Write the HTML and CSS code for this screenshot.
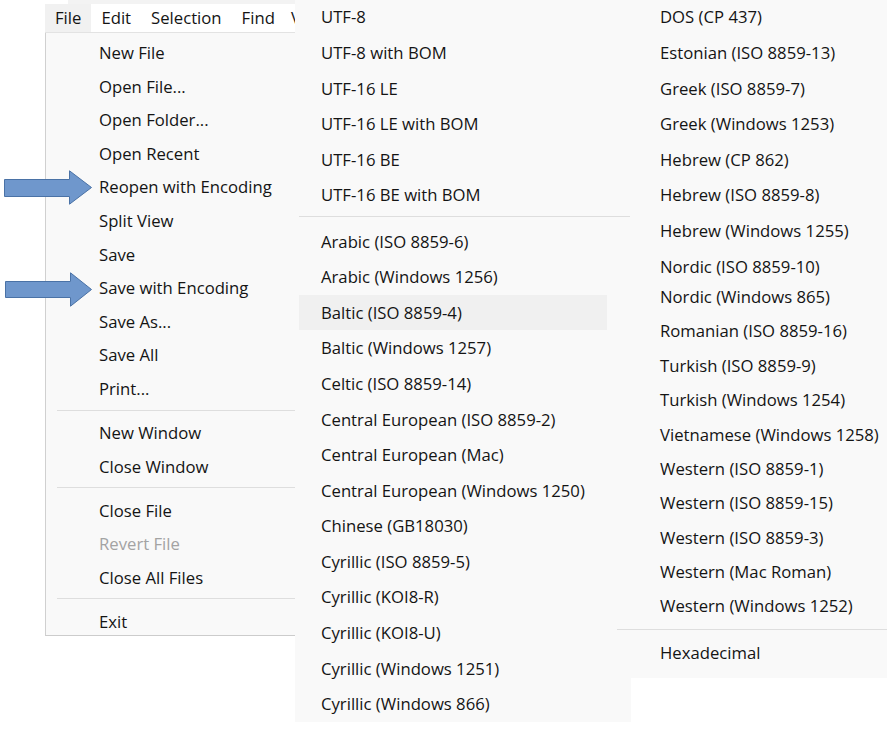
FILE: index.html
```html
<!DOCTYPE html>
<html lang="en">
<head>
<meta charset="utf-8">
<title>Encoding menus</title>
<link rel="stylesheet" href="styles.css">
</head>
<body>
<div class="canvas">
  <div class="top-strip"></div>

  <div class="app">
    <nav class="menubar">
      <span class="mb-item active">File</span>
      <span class="mb-item">Edit</span>
      <span class="mb-item">Selection</span>
      <span class="mb-item tight-right">Find</span>
      <span class="mb-item">View</span>
    </nav>
    <div class="menu file-menu">
      <div class="item">New File</div>
      <div class="item">Open File...</div>
      <div class="item">Open Folder...</div>
      <div class="item">Open Recent</div>
      <div class="item">Reopen with Encoding</div>
      <div class="item">Split View</div>
      <div class="item">Save</div>
      <div class="item">Save with Encoding</div>
      <div class="item">Save As...</div>
      <div class="item">Save All</div>
      <div class="item">Print...</div>
      <div class="sep"></div>
      <div class="item">New Window</div>
      <div class="item">Close Window</div>
      <div class="sep"></div>
      <div class="item">Close File</div>
      <div class="item disabled">Revert File</div>
      <div class="item">Close All Files</div>
      <div class="sep"></div>
      <div class="item">Exit</div>
    </div>
  </div>

  <div class="menu enc-menu enc-main">
    <div class="item">UTF-8</div>
    <div class="item">UTF-8 with BOM</div>
    <div class="item">UTF-16 LE</div>
    <div class="item">UTF-16 LE with BOM</div>
    <div class="item">UTF-16 BE</div>
    <div class="item">UTF-16 BE with BOM</div>
    <div class="sep"></div>
    <div class="item">Arabic (ISO 8859-6)</div>
    <div class="item">Arabic (Windows 1256)</div>
    <div class="item hover">Baltic (ISO 8859-4)</div>
    <div class="item">Baltic (Windows 1257)</div>
    <div class="item">Celtic (ISO 8859-14)</div>
    <div class="item">Central European (ISO 8859-2)</div>
    <div class="item">Central European (Mac)</div>
    <div class="item">Central European (Windows 1250)</div>
    <div class="item">Chinese (GB18030)</div>
    <div class="item">Cyrillic (ISO 8859-5)</div>
    <div class="item">Cyrillic (KOI8-R)</div>
    <div class="item">Cyrillic (KOI8-U)</div>
    <div class="item">Cyrillic (Windows 1251)</div>
    <div class="item">Cyrillic (Windows 866)</div>
  </div>

  <div class="menu enc-menu enc-more">
    <div class="item">DOS (CP 437)</div>
    <div class="item">Estonian (ISO 8859-13)</div>
    <div class="item">Greek (ISO 8859-7)</div>
    <div class="item">Greek (Windows 1253)</div>
    <div class="item">Hebrew (CP 862)</div>
    <div class="item">Hebrew (ISO 8859-8)</div>
    <div class="item">Hebrew (Windows 1255)</div>
    <div class="item">Nordic (ISO 8859-10)</div>
    <div class="item tight splice">Nordic (Windows 865)</div>
    <div class="item tight">Romanian (ISO 8859-16)</div>
    <div class="item tight">Turkish (ISO 8859-9)</div>
    <div class="item tight">Turkish (Windows 1254)</div>
    <div class="item tight">Vietnamese (Windows 1258)</div>
    <div class="item tight">Western (ISO 8859-1)</div>
    <div class="item tight">Western (ISO 8859-15)</div>
    <div class="item tight">Western (ISO 8859-3)</div>
    <div class="item tight">Western (Mac Roman)</div>
    <div class="item tight">Western (Windows 1252)</div>
    <div class="sep"></div>
    <div class="item tight">Hexadecimal</div>
  </div>

  <svg class="arrow arrow-reopen" width="90" height="36" viewBox="0 0 90 36" aria-hidden="true">
    <path d="M0.5 9.5 H65.5 V0.8 L87.5 17.5 L65.5 34.2 V26.5 H0.5 Z"/>
  </svg>
  <svg class="arrow arrow-save" width="90" height="36" viewBox="0 0 90 36" aria-hidden="true">
    <path d="M0.5 9.5 H65.5 V0.8 L86.5 17.5 L65.5 34.2 V25.5 H0.5 Z"/>
  </svg>
</div>
</body>
</html>
```

FILE: styles.css
```css
html, body {
  margin: 0;
  padding: 0;
  background: #ffffff;
}

body {
  font-family: "Open Sans", "Noto Sans", sans-serif;
  font-size: 16.7px;
  color: #141414;
  overflow: hidden;
}

.canvas {
  position: relative;
  width: 887px;
  height: 729px;
  overflow: hidden;
}

.top-strip {
  position: absolute;
  left: 68px;
  top: 0;
  width: 229px;
  height: 4px;
  background: #f3f3f3;
}

/* left application window: menu bar + file menu */
.app {
  position: absolute;
  left: 45px;
  top: 4px;
  width: 252px;
}

.menubar {
  display: flex;
  height: 28px;
  background: #ffffff;
  border-bottom: 1px solid #e3e3e3;
  white-space: nowrap;
  overflow: hidden;
}

.mb-item {
  display: flex;
  align-items: center;
  padding: 0 10px;
  line-height: 28px;
}

.mb-item.tight-right {
  padding-right: 6px;
}

.mb-item.active {
  background: #f1f1f1;
}

.menu {
  background: #f9f9f9;
  white-space: nowrap;
  box-sizing: border-box;
}

.item {
  height: 35.6px;
  line-height: 35.6px;
}

.file-menu {
  height: 603px;
  padding-top: 3px;
  border-left: 1px solid #d0d0d0;
  border-bottom: 1px solid #cccccc;
  overflow: hidden;
}

.file-menu .item {
  height: 33.6px;
  line-height: 33.6px;
  padding-left: 53px;
}

.file-menu .item.disabled {
  color: #a3a3a3;
}

.file-menu .sep {
  height: 1px;
  margin: 4px 0 5.4px 11px;
  background: #dedede;
}

/* encoding submenus */
.enc-menu {
  position: absolute;
  top: 0;
}

.enc-main {
  left: 295px;
  width: 336px;
  height: 723px;
  margin-top: -0.6px;
  z-index: 1;
}

.enc-main .item {
  margin: 0 24px 0 4px;
  padding-left: 22px;
}

.enc-main .item.hover {
  background: #f0f0f0;
}

.enc-main .sep {
  height: 1px;
  margin: 3.4px 1px 6.2px 4px;
  background: #dedede;
}

.enc-more {
  left: 631px;
  width: 256px;
  height: 679px;
  margin-top: -0.6px;
  z-index: 2;
}

.enc-more .item {
  padding-left: 29px;
}

.enc-more .item.tight {
  height: 34.4px;
  line-height: 34.4px;
}

.enc-more .item.splice {
  margin-top: -4.2px;
}

.enc-more .sep {
  height: 1px;
  margin: 5px 0 6px -14px;
  background: #dedede;
}

/* callout arrows */
.arrow {
  position: absolute;
  z-index: 3;
}

.arrow path {
  fill: #6f97cc;
  stroke: #4a72a6;
  stroke-width: 1;
  stroke-linejoin: miter;
}

.arrow-reopen {
  left: 4px;
  top: 170px;
}

.arrow-save {
  left: 5px;
  top: 272px;
}
```
